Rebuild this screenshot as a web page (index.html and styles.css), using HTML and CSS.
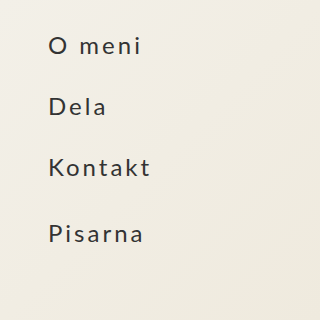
FILE: index.html
```html
<!DOCTYPE html>
<html lang="sl">
<head>
    <meta charset="UTF-8">
    <meta name="viewport" content="width=device-width, initial-scale=1.0">
    <title>Meni</title>
    <link rel="stylesheet" href="styles.css">
</head>
<body>
    <nav class="menu">
        <ul class="menu-list">
            <li class="menu-item"><a href="#">O meni</a></li>
            <li class="menu-item"><a href="#">Dela</a></li>
            <li class="menu-item"><a href="#">Kontakt</a></li>
            <li class="menu-item menu-item-last"><a href="#">Pisarna</a></li>
        </ul>
    </nav>
</body>
</html>
```

FILE: styles.css
```css
html, body {
    margin: 0;
    height: 100%;
}
body {
    background: linear-gradient(135deg, #f3f0e8 0%, #efeade 100%);
    font-family: Lato, "Liberation Sans", sans-serif;
    color: #333333;
}
.menu {
    padding: 30px 0 0 48px;
}
.menu-list {
    display: flex;
    flex-direction: column;
    gap: 31px;
    margin: 0;
    padding: 0;
    list-style: none;
}
.menu-item {
    font-size: 24px;
    line-height: 30px;
    letter-spacing: 3px;
}
.menu-item-last {
    margin-top: 5px;
}
.menu-item a {
    color: inherit;
    text-decoration: none;
}
```
